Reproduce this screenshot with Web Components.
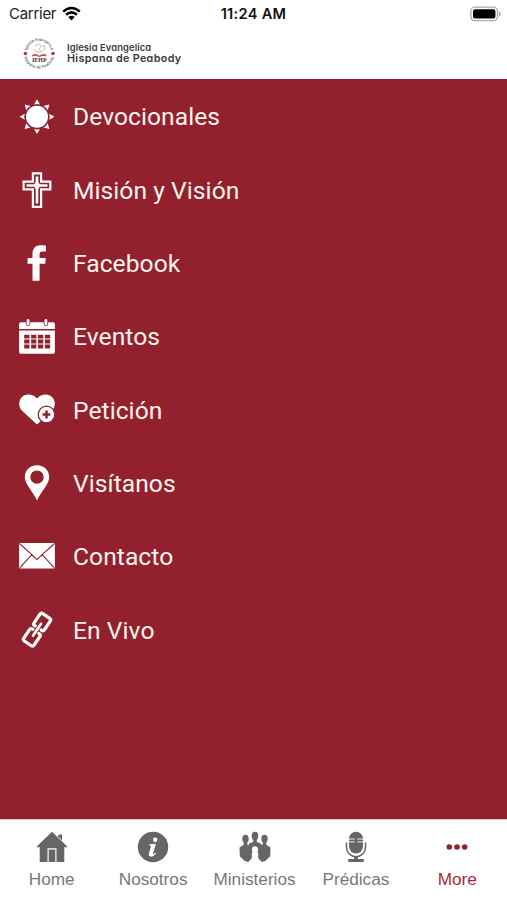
<!DOCTYPE html>
<html lang="es">
<head>
<meta charset="utf-8">
<title>Iglesia Evangelica Hispana de Peabody</title>
<style>
html,body{margin:0;height:100%;background:#fff}
</style>
</head>
<body>
<church-app></church-app>
<script>
const define = (name, html) => {
  const t = document.createElement('template');
  t.innerHTML = html;
  customElements.define(name, class extends HTMLElement {
    constructor() {
      super();
      this.attachShadow({mode: 'open'}).appendChild(t.content.cloneNode(true));
    }
  });
};

const ICONS = {
  sun: ['0 0 38 38', `<circle cx="19" cy="18.700" r="11"/>` +
    [0,45,90,135,180,225,270,315].map(a => `<path transform="rotate(${a} 19 18.7)" d="M16 6.500L19 1.300l3 5.200q-3-1.200-6 0z"/>`).join('')],
  cross: ['0 0 38 38', `<path d="M14.900 2.300h8.200v8.300h9.200v7.800h-9.200v17.400h-8.200V18.400H5.600v-7.800h9.300z" fill="#92212d" stroke="currentColor" stroke-width="2.200"/><path d="M19 5.500v27" stroke="currentColor" stroke-width="2.600"/><path d="M8.500 14.500h21" stroke="currentColor" stroke-width="2.400"/><path d="M16 14.500h6M19 11v7" stroke="currentColor" stroke-width="3.400"/>`],
  facebook: ['0 0 38 38', `<path d="M27.900 1.400v6.200h-3.600c-2.200 0-2.700 1-2.700 2.600v3.900h6.200l-.6 5.600h-5.600v17h-7.100v-17H9.600v-5.600h4.900V9.600c0-5.200 3.200-8.400 7.900-8.400 2.200 0 4.200.1 5.500.2z"/>`],
  calendar: ['0 0 38 38', `<path d="M2.800 4.200h5.100v1.900q0 2.100 2.200 2.100t2.200-2.100V4.200h13.400v1.900q0 2.100 2.200 2.100t2.200-2.100V4.200h5.100q1.700 0 1.700 1.700v5.200H1.100V5.900q0-1.700 1.700-1.700z"/><path d="M10.100 2.300v3.800M27.900 2.300v3.800" stroke="currentColor" stroke-width="2.800" stroke-linecap="round"/><path fill-rule="evenodd" d="M1.100 12.500h35.800v21.600q0 1.700-1.700 1.700H2.800q-1.700 0-1.700-1.700z` +
    [16.7,21.6,26.5].map(y => [6.2,13.1,20,26.9].map(x => `M${x} ${y}h5.3v3.9h-5.3z`).join('')).join('') + `"/>`],
  heart: ['0 0 38 38', `<path d="M19 33.600L3.800 19.400C-.2 15.200.6 8 5.200 5c4.600-3 10.400-1.400 13.800 2.500C22.400 3.600 28.200 2 32.800 5s5.400 10.200 1.400 14.400z"/><circle cx="28.500" cy="23.500" r="8.300" fill="currentColor" stroke="#92212d" stroke-width="1.300"/><path d="M28.500 19.600v7.800M24.600 23.500h7.800" stroke="#92212d" stroke-width="2.500"/>`],
  pin: ['0 0 38 38', `<path fill-rule="evenodd" d="M19 1.200c7.300 0 12.200 5.300 12.200 11.800C31.200 20.700 23 26.900 19 36.600 15 26.900 6.800 20.700 6.800 13 6.800 6.500 11.700 1.200 19 1.200zm0 5.200a6.700 6.700 0 1 0 0 13.400 6.700 6.700 0 0 0 0-13.400z"/>`],
  mail: ['0 0 38 38', `<rect x="1.100" y="6" width="35.800" height="25.500" rx="1.600"/><path d="M2 7L15 18.700l3 3q1 .8 2 0l3-3L36 7M2 30.700l11.300-12.500 1.700.8M36 30.700L24.700 18.200l-1.700.8" fill="none" stroke="#92212d" stroke-width="1.100"/>`],
  link: ['0 0 38 38', `<g transform="translate(19 18.7) rotate(34)" fill="none" stroke="currentColor" stroke-width="3.200" stroke-linecap="round" stroke-linejoin="round"><path d="M-3.600-2.100h-.7q-1.900 0-1.900-2v-10.400q0-2 2-2h8.400q2 0 2 2v10.400q0 2-1.900 2h-.7M-3.600 2.100h-.7q-1.900 0-1.900 2v10.400q0 2 2 2h8.400q2 0 2-2V4.100q0-2-1.900-2h-.7"/><path d="M0-7.200V7.200" stroke-width="2.600"/></g>`],
  home: ['0 0 32 32', `<path d="M16 .7L31.300 15.600l-1.300.9-1.700-.6V31H20.500V17.200H11.500V31H3.700V15.900l-1.700.6L.7 15.600z"/><path d="M12.700 18.400h6.600V31h-6.600z"/><path d="M22 4.800l1-1.300h3v6l-4-3.900z"/>`],
  info: ['0 0 32 32', `<circle cx="16" cy="16" r="15.200"/><g fill="#fff"><circle cx="18.200" cy="8.800" r="2.200"/><path d="M12.400 13.200l6.500-.5-2.800 9.600c-.3 1.300.3 1.400 2.400-.7l.7.700c-2 2.600-3.500 3.300-5.100 3.300-2 0-2.700-1.200-2.200-3l1.900-6.600c.3-1.200 0-1.700-1.700-1.800z"/></g>`],
  people: ['0 0 32 32', `<ellipse cx="16" cy="4.900" rx="3.300" ry="4.200"/><path d="M14.200 8h3.600v3l4.200 1.500v7h-2.600q-.2-4.300-3.400-4.300t-3.400 4.300H10v-7l4.200-1.500z"/><ellipse cx="6.500" cy="7.800" rx="3.200" ry="4.100"/><ellipse cx="25.500" cy="7.800" rx="3.200" ry="4.100"/><path d="M4.700 10.500h3.600v3l4.500 1.500q-1.100 3.500.8 5.300l-.8 2v5l-3.600 3.700-3.500-1L.8 25.200.5 16.500l4.200-2.800z"/><path transform="translate(32 0) scale(-1 1)" d="M4.700 10.500h3.600v3l4.500 1.500q-1.100 3.500.8 5.300l-.8 2v5l-3.600 3.700-3.500-1L.8 25.200.5 16.500l4.200-2.800z"/>`],
  mic: ['0 0 32 32', `<rect x="9" y=".8" width="14" height="21.800" rx="7"/><path d="M9 8h5.600M9 10.900h5.600M17.400 8H23M17.400 10.900H23" stroke="#fff" stroke-width=".9"/><path d="M6.500 11.500v4.700c0 5.600 4 9.500 9.500 9.500s9.500-3.900 9.500-9.500v-4.700" fill="none" stroke="currentColor" stroke-width="1.500"/><path d="M14.100 25h3.800v3h5.900v3H8.200v-3h5.900z"/>`],
  more: ['0 0 32 32', `<circle cx="8.300" cy="16" r="2.800"/><circle cx="16" cy="16" r="2.800"/><circle cx="23.700" cy="16" r="2.800"/>`]
};

customElements.define('app-icon', class extends HTMLElement {
  connectedCallback() {
    const [box, body] = ICONS[this.getAttribute('name')];
    this.attachShadow({mode: 'open'}).innerHTML =
      `<style>:host{display:block;flex:none}svg{display:block;width:100%;height:100%;fill:currentColor}</style><svg viewBox="${box}" aria-hidden="true">${body}</svg>`;
  }
});

define('status-bar', `
<style>
:host{display:grid;grid-template-columns:1fr auto 1fr;align-items:center;height:28px;box-sizing:border-box;padding:0 6px 1px 9px;font:15px Inter,"Liberation Sans",sans-serif;color:#222}
.left{display:flex;align-items:center;gap:6px}
.carrier{letter-spacing:-.28px}
.time{font-weight:600;font-size:14.600px;letter-spacing:.3px;color:#111;margin-right:3px}
svg{display:block}
.battery{justify-self:end}
</style>
<div class="left"><span class="carrier">Carrier</span>
<svg width="19" height="15" viewBox="0 0 19 15"><g fill="none" stroke="#000" stroke-width="2.500"><path d="M1.200 5.600q8.300-7.200 16.600 0M4.100 8.700q5.400-4.600 10.800 0"/></g><path d="M6.300 11.100q3.200-2.500 6.400 0L9.500 14.400z"/></svg></div>
<span class="time">11:24 AM</span>
<svg class="battery" width="31" height="16" viewBox="0 0 31 16"><rect x=".9" y="1.200" width="26.600" height="13.400" rx="4" fill="#fff" stroke="#aaa" stroke-width="1.300"/><rect x="3" y="3.300" width="22.400" height="9.300" rx="2"/><path d="M28.900 5.500q2 .8 2 2.400t-2 2.400z" fill="#aaa"/></svg>`);

define('brand-header', `
<style>
:host{display:flex;align-items:center;height:51px;box-sizing:border-box;padding:0 0 0 22px;gap:11px;color:#3a3a3a}
svg{display:block;width:34px;height:34px;flex:none;margin-top:-1px}
.name{display:flex;flex-direction:column;font:600 9.400px/11px Inter,"Liberation Sans",sans-serif;font-feature-settings:"cv11";white-space:nowrap;margin-top:-2px}
.a{letter-spacing:.1px}
.b{font-size:10.800px;letter-spacing:.32px}
</style>
<svg viewBox="0 0 34 34">
<defs><path id="top" d="M4.700 17a12.300 12.300 0 0 1 24.600 0"/><path id="bottom" d="M1.500 17a15.500 15.500 0 0 0 31 0"/></defs>
<g font-family="Inter,sans-serif" font-weight="600" font-size="3.800" fill="#666" text-anchor="middle">
<text><textPath href="#top" startOffset="50%" textLength="33">Iglesia Evangelica</textPath></text>
<text><textPath href="#bottom" startOffset="50%" textLength="40">Hispana de Peabody</textPath></text></g>
<circle cx="3.400" cy="17.500" r="1.800" fill="#c92743"/><circle cx="31" cy="17.500" r="1.800" fill="#c92743"/>
<path d="M13 10.500l4-3 2 2.500-2 3 2 2M20 11l2-2 1 3-3 4h-5l-3-3" fill="none" stroke="#bbb" stroke-width=".9"/>
<path d="M9.800 20.500q0-2.500 3.200-2.500 3 0 4.300 1.700 1.300-1.700 4.300-1.700 3.200 0 3.200 2.500-4-1-7.500.6-3.500-1.600-7.500-.6z" fill="#d44d62"/>
<text x="17.300" y="26" font-family="Liberation Serif,serif" font-weight="700" font-size="5.400" textLength="14.500" lengthAdjust="spacingAndGlyphs" text-anchor="middle" fill="#333">IEHP</text>
</svg>
<div class="name"><span class="a">Iglesia Evangelica</span><span class="b">Hispana de Peabody</span></div>`);

define('menu-row', `
<style>
:host{display:flex;align-items:center;gap:17px;height:73.300px;padding-left:18px;color:#fff}
::slotted(app-icon){width:38px;height:38px}
.label{font:24.600px/30px Roboto,sans-serif;letter-spacing:.06px;color:#fff4ee;padding-top:1.600px}
</style>
<slot name="icon"></slot><span class="label"><slot></slot></span>`);

define('tab-item', `
<style>
:host{flex:1;min-width:0;display:flex;flex-direction:column;align-items:center;gap:5px;padding-top:11px;color:#666}
:host([active]){color:#92212d}
::slotted(app-icon){width:32px;height:32px}
.label{font:17.200px/22px "Liberation Sans",Arial,sans-serif;color:#777;white-space:nowrap}
:host([active]) .label{color:#a02b3a}
</style>
<slot name="icon"></slot><span class="label"><slot></slot></span>`);

const row = (icon, label) => `<menu-row><app-icon slot="icon" name="${icon}"></app-icon>${label}</menu-row>`;
const tab = (icon, label, extra = '') => `<tab-item ${extra}><app-icon slot="icon" name="${icon}"></app-icon>${label}</tab-item>`;

define('church-app', `
<style>
:host{display:flex;flex-direction:column;height:900px;overflow:hidden;background:#fff}
main{flex:1;background:#92212d;padding-top:1px}
nav{display:flex;height:81px;box-sizing:border-box;border-top:1px solid #e4c9cc;padding-left:1px;margin-right:-1px}
</style>
<status-bar></status-bar>
<brand-header></brand-header>
<main>
${row('sun','Devocionales')}${row('cross','Misión y Visión')}${row('facebook','Facebook')}${row('calendar','Eventos')}
${row('heart','Petición')}${row('pin','Visítanos')}${row('mail','Contacto')}${row('link','En Vivo')}
</main>
<nav>${tab('home','Home')}${tab('info','Nosotros')}${tab('people','Ministerios')}${tab('mic','Prédicas')}${tab('more','More','active')}</nav>`);
</script>
</body>
</html>
